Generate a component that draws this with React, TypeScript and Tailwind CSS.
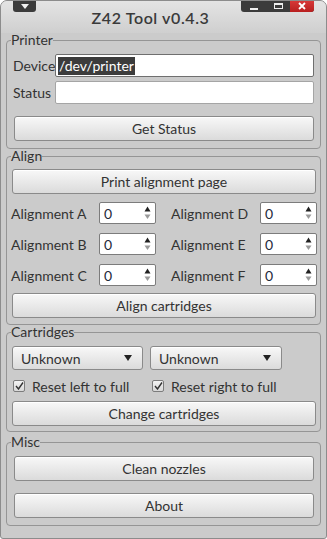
import React from 'react';

function Btn({ children, className = '' }: { children: React.ReactNode; className?: string }) {
  return (
    <div
      className={`flex h-[25px] items-center justify-center rounded-[3px] border border-[#8a8a8a] bg-linear-to-b from-[#f8f8f8] to-[#dbdbdb] text-[14px] text-[#333] shadow-[inset_0_1px_0_#ffffff] ${className}`}
    >
      {children}
    </div>
  );
}

function Group({ title, children, className = '' }: { title: string; children: React.ReactNode; className?: string }) {
  return (
    <fieldset className={`mx-[5px] rounded-[4px] border border-[#959595] ${className}`}>
      <legend className="ml-[4px] p-0 text-[14px] leading-[14px] text-[#333]">{title}</legend>
      {children}
    </fieldset>
  );
}

function Spin() {
  return (
    <div className="flex h-[22px] w-[57px] items-center justify-between rounded-[2px] border border-[#7c7c7c] bg-white pl-[4px] pr-[4px]">
      <span className="text-[14px] text-[#1d2a3a]">0</span>
      <svg width="7" height="14" viewBox="0 0 7 14">
        <path d="M3.5 0.5 L6.5 5.5 L0.5 5.5 Z" fill="#222" />
        <path d="M0.5 8.5 L6.5 8.5 L3.5 13 Z" fill="#9a9a9a" />
      </svg>
    </div>
  );
}

function Combo({ className = '' }: { className?: string }) {
  return (
    <div
      className={`flex h-[24px] items-center justify-between rounded-[3px] border border-[#8a8a8a] bg-linear-to-b from-[#f8f8f8] to-[#dbdbdb] pl-[8px] pr-[10px] text-[14px] text-[#333] shadow-[inset_0_1px_0_#ffffff] ${className}`}
    >
      <span>Unknown</span>
      <svg width="8" height="6" viewBox="0 0 8 6">
        <path d="M0 0 L8 0 L4 6 Z" fill="#222" />
      </svg>
    </div>
  );
}

function Check({ label, className = '' }: { label: string; className?: string }) {
  return (
    <div className={`flex h-[14px] items-center ${className}`}>
      <div className="flex h-[12px] w-[12px] items-center justify-center rounded-[2px] border border-[#7c7c7c] bg-linear-to-b from-[#f4f4f4] to-[#d8d8d8]">
        <svg width="9" height="8" viewBox="0 0 9 8">
          <path d="M1 4 L3.5 7 L8 0.5" stroke="#333" strokeWidth="1.4" fill="none" />
        </svg>
      </div>
      <span className="ml-[7px] text-[14px] text-[#333]">{label}</span>
    </div>
  );
}

function AlignRow({ left, right }: { left: string; right: string }) {
  return (
    <div className="flex h-[22px] items-center pl-[4px]">
      <span className="w-[88px] text-[14px] text-[#333]">Alignment {left}</span>
      <Spin />
      <span className="ml-[15px] w-[89px] text-[14px] text-[#333]">Alignment {right}</span>
      <Spin />
    </div>
  );
}

export default function App() {
  return (
    <div className="relative h-[539px] w-[327px] overflow-hidden rounded-t-[7px] rounded-b-[3px] border border-[#8c8c8c] bg-[#cbcbcb] font-['Lato','Open_Sans',sans-serif]">
      {/* Title bar */}
      <div className="relative flex h-[32px] items-center justify-center bg-linear-to-b from-[#e4e4e4] to-[#cfcfcf] pt-[2px] pr-[26px]">
        <span className="text-[16px] font-semibold tracking-[0.6px] text-[#3a3a3a]">Z42 Tool v0.4.3</span>
        <div className="absolute top-[-1px] left-[12px] flex h-[12px] w-[23px] items-center justify-center rounded-b-[3px] bg-[#3b3b3b]">
          <svg width="8" height="5" viewBox="0 0 8 5">
            <path d="M0 0 L8 0 L4 5 Z" fill="#f0f0f0" />
          </svg>
        </div>
        <div className="absolute top-[-1px] left-[240px] flex h-[12px] w-[73px] overflow-hidden rounded-b-[3px] bg-[#3b3b3b]">
          <div className="flex w-[25px] items-end justify-center pb-[2px]">
            <div className="h-[2px] w-[8px] bg-[#eee]" />
          </div>
          <div className="flex w-[24px] items-center justify-center">
            <div className="h-[6px] w-[9px] border border-t-2 border-[#eee]" />
          </div>
          <div className="flex w-[24px] items-center justify-center bg-linear-to-b from-[#d93a3a] to-[#b81f1f]">
            <svg width="8" height="8" viewBox="0 0 8 8">
              <path d="M1 1 L7 7 M7 1 L1 7" stroke="#fff" strokeWidth="1.8" />
            </svg>
          </div>
        </div>
      </div>

      {/* Printer */}
      <Group title="Printer" className="pb-[7px]">
        <div className="mt-[7px] flex h-[23px] items-center pl-[6px] pr-[6px]">
          <span className="w-[42px] text-[14px] text-[#333]">Device</span>
          <div className="flex h-[23px] flex-1 items-center rounded-[2px] border border-[#6f6f6f] bg-white pl-[2px]">
            <span className="bg-[#3c3c3c] px-[1px] text-[14px] leading-[18px] text-white">/dev/printer</span>
          </div>
        </div>
        <div className="mt-[4px] flex h-[23px] items-center pl-[6px] pr-[6px]">
          <span className="w-[42px] text-[14px] text-[#333]">Status</span>
          <div className="h-[23px] flex-1 rounded-[2px] border border-[#a5a5a5] bg-white" />
        </div>
        <Btn className="mt-[12px] ml-[7px] mr-[6px]">Get Status</Btn>
      </Group>

      {/* Align */}
      <Group title="Align" className="pb-[6px]">
        <Btn className="mt-[6px] ml-[5px] mr-[4px]">Print alignment page</Btn>
        <div className="mt-[8px] flex flex-col gap-[9px]">
          <AlignRow left="A" right="D" />
          <AlignRow left="B" right="E" />
          <AlignRow left="C" right="F" />
        </div>
        <Btn className="mt-[7px] ml-[5px] mr-[4px]">Align cartridges</Btn>
      </Group>

      {/* Cartridges */}
      <Group title="Cartridges" className="pb-[5px]">
        <div className="mt-[7px] flex gap-[7px] pl-[5px]">
          <Combo className="w-[131px]" />
          <Combo className="w-[132px]" />
        </div>
        <div className="mt-[9px] flex pl-[6px]">
          <Check label="Reset left to full" className="w-[139px]" />
          <Check label="Reset right to full" />
        </div>
        <Btn className="mt-[8px] ml-[5px] mr-[4px]">Change cartridges</Btn>
      </Group>

      {/* Misc */}
      <Group title="Misc" className="mt-[3px] pb-[7px]">
        <Btn className="mt-[7px] ml-[7px] mr-[6px]">Clean nozzles</Btn>
        <Btn className="mt-[12px] ml-[7px] mr-[6px]">About</Btn>
      </Group>
    </div>
  );
}
